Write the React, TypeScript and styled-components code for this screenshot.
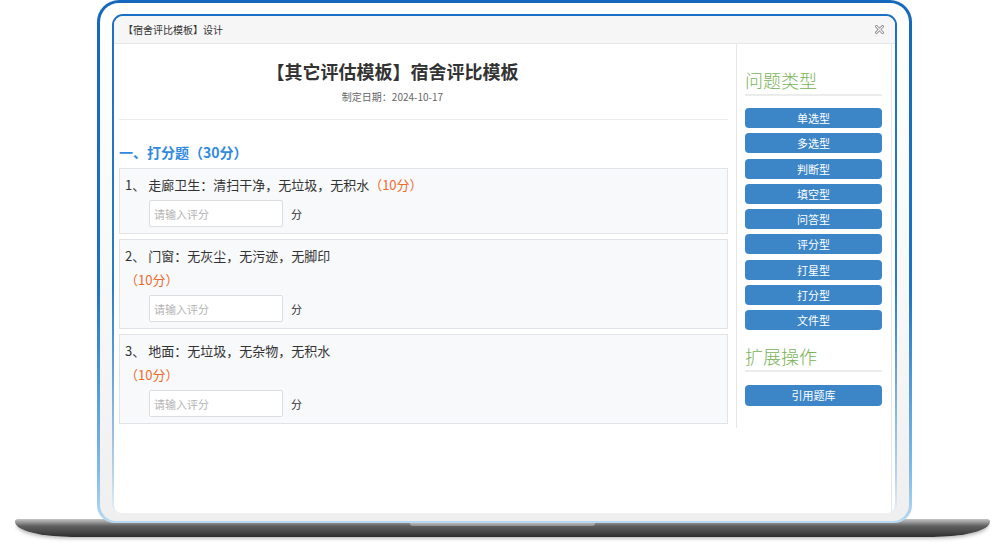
import React from "react";
import styled, { createGlobalStyle } from "styled-components";

const GlobalStyle = createGlobalStyle`
  html, body {
    margin: 0;
    padding: 0;
    background: #ffffff;
  }
  body {
    font-family: "Noto Sans CJK SC", "Liberation Sans", sans-serif;
    color: #333;
  }
`;

const Page = styled.div`
  width: 1000px;
  height: 546px;
  overflow: hidden;
  display: flex;
  flex-direction: column;
`;

const Lid = styled.div`
  position: relative;
  z-index: 2;
  margin-left: 97px;
  width: 815px;
  height: 523px;
  box-sizing: border-box;
  padding: 3px 3px 2px;
  border-radius: 22px 22px 18px 18px;
  background: linear-gradient(to bottom, #1568bb 0%, #1c74c6 55%, #7fbbe8 90%, #b9d9f1 100%);
`;

const Bezel = styled.div`
  height: 100%;
  box-sizing: border-box;
  padding: 11px 12px 8px;
  border-radius: 19px 19px 16px 16px;
  background: linear-gradient(to bottom, #ffffff 0%, #f7f7f7 60%, #efefef 100%);
`;

const ScreenFrame = styled.div`
  height: 100%;
  box-sizing: border-box;
  padding: 2px 2px 0;
  border-radius: 11px 11px 9px 9px;
  background: linear-gradient(to bottom, #1a70c2 0%, #2a7cc8 55%, #b7d3ea 92%, #e6eef5 100%);
`;

const Screen = styled.div`
  height: 100%;
  display: flex;
  flex-direction: column;
  border-radius: 9px 9px 8px 8px;
  background: #ffffff;
  overflow: hidden;
`;

const TitleBar = styled.div`
  flex: 0 0 28px;
  box-sizing: border-box;
  display: flex;
  align-items: center;
  justify-content: space-between;
  padding: 0 11px 0 9px;
  background: #f6f6f6;
  border-bottom: 1px solid #e8e8e8;
  font-size: 10px;
  color: #333;
`;

const CloseIcon = () => (
  <svg width="9" height="9" viewBox="0 0 9 9">
    <path d="M1.5 1.5 L7.5 7.5 M7.5 1.5 L1.5 7.5" stroke="#8a8a8a" strokeWidth="2.8" strokeLinecap="square" />
    <path d="M1.5 1.5 L7.5 7.5 M7.5 1.5 L1.5 7.5" stroke="#f6f6f6" strokeWidth="1.1" strokeLinecap="square" />
  </svg>
);

const Body = styled.div`
  flex: 1;
  display: flex;
  align-items: stretch;
`;

const Main = styled.div`
  width: 622px;
  box-sizing: border-box;
  padding: 0 8px 4px 5px;
`;

const Header = styled.div`
  padding: 15px 62px 15px 0;
  text-align: center;
  border-bottom: 1px solid #ececec;
`;

const DocTitle = styled.div`
  font-size: 18px;
  line-height: 24px;
  font-weight: 700;
  color: #333;
`;

const DocDate = styled.div`
  margin-top: 7px;
  font-size: 10px;
  line-height: 14px;
  color: #666;
`;

const SectionTitle = styled.div`
  margin: 22px 0 6px;
  font-size: 14px;
  line-height: 20px;
  font-weight: 700;
  color: #2f8ae0;
`;

const CardList = styled.div`
  display: flex;
  flex-direction: column;
  gap: 5px;
`;

const Card = styled.div`
  padding: 6px 5px;
  background: #f8f9fb;
  border: 1px solid #e1e3e7;
`;

const QText = styled.div`
  font-size: 13px;
  line-height: 20px;
  color: #333;
  white-space: pre;
`;

const Score = styled.span<{ $block?: boolean }>`
  color: #ef6a2c;
  font-size: 13px;
  line-height: 20px;
  display: ${(p) => (p.$block ? "block" : "inline")};
  margin-top: ${(p) => (p.$block ? "4px" : "0")};
`;

const InputRow = styled.div`
  margin: 5px 0 0 24px;
  display: flex;
  align-items: center;
  gap: 8px;
  font-size: 11px;
  color: #333;
`;

const ScoreInput = styled.input`
  width: 134px;
  height: 27px;
  box-sizing: border-box;
  padding: 0 4px;
  border: 1px solid #dcdde0;
  border-radius: 2px;
  background: #fff;
  font-family: inherit;
  font-size: 11px;
  outline: none;
  &::placeholder {
    color: #b4b4b4;
  }
`;

const SideColumn = styled.div`
  width: 156px;
  box-sizing: border-box;
  border-right: 1px solid #e6e6e6;
`;

const SidePanel = styled.div`
  border-left: 1px solid #e6e6e6;
  padding: 24px 9px 22px 8px;
`;

const SideHeading = styled.div<{ $gap?: number; $after?: number }>`
  margin-top: ${(p) => p.$gap ?? 0}px;
  padding-bottom: 2px;
  border-bottom: 2px solid #ececec;
  margin-bottom: ${(p) => p.$after ?? 12}px;
  font-size: 18px;
  line-height: 24px;
  font-weight: 300;
  color: #78b356;
`;

const ButtonStack = styled.div`
  display: flex;
  flex-direction: column;
  gap: 5.25px;
`;

const TypeButton = styled.button<{ $tall?: boolean }>`
  height: ${(p) => (p.$tall ? 21 : 20)}px;
  width: 100%;
  border: none;
  border-radius: 4px;
  background: #3c86c7;
  color: #fff;
  font-family: inherit;
  font-size: 11px;
  line-height: 20px;
  padding: 0;
`;

const Base = styled.div`
  position: relative;
  z-index: 1;
  margin: -4px 0 0 15px;
  width: 975px;
  height: 18px;
  border-radius: 3px 3px 60px 60px / 3px 3px 16px 16px;
  background: linear-gradient(
    to bottom,
    #c4c4c4 0%,
    #8d8d8d 22%,
    #5e5e5e 40%,
    #4a4a4a 70%,
    #2d2d2d 100%
  );
  box-shadow: 0 3px 4px -2px rgba(0, 0, 0, 0.35);
  display: flex;
  justify-content: center;
`;

const Notch = styled.div`
  margin-top: 4px;
  width: 185px;
  height: 3px;
  border-radius: 0 0 6px 6px;
  background: linear-gradient(to bottom, #b9b9b9, #8e8e8e);
`;

const types = ["单选型", "多选型", "判断型", "填空型", "问答型", "评分型", "打星型", "打分型", "文件型"];

const questions = [
  { no: "1、", text: "走廊卫生：清扫干净，无垃圾，无积水", inline: true },
  { no: "2、", text: "门窗：无灰尘，无污迹，无脚印", inline: false },
  { no: "3、", text: "地面：无垃圾，无杂物，无积水", inline: false },
];

export default function App() {
  return (
    <Page>
      <GlobalStyle />
      <Lid>
        <Bezel>
          <ScreenFrame>
            <Screen>
              <TitleBar>
                <span>【宿舍评比模板】设计</span>
                <CloseIcon />
              </TitleBar>
              <Body>
                <Main>
                  <Header>
                    <DocTitle>【其它评估模板】宿舍评比模板</DocTitle>
                    <DocDate>制定日期：2024-10-17</DocDate>
                  </Header>
                  <SectionTitle>一、打分题（30分）</SectionTitle>
                  <CardList>
                    {questions.map((q) => (
                      <Card key={q.no}>
                        <QText>
                          {q.no} {q.text}
                          {q.inline && <Score>（10分）</Score>}
                        </QText>
                        {!q.inline && <Score $block>（10分）</Score>}
                        <InputRow>
                          <ScoreInput placeholder="请输入评分" />
                          <span>分</span>
                        </InputRow>
                      </Card>
                    ))}
                  </CardList>
                </Main>
                <SideColumn>
                  <SidePanel>
                    <SideHeading>问题类型</SideHeading>
                    <ButtonStack>
                      {types.map((t) => (
                        <TypeButton key={t}>{t}</TypeButton>
                      ))}
                    </ButtonStack>
                    <SideHeading $gap={14} $after={9}>扩展操作</SideHeading>
                    <TypeButton $tall>引用题库</TypeButton>
                  </SidePanel>
                </SideColumn>
              </Body>
            </Screen>
          </ScreenFrame>
        </Bezel>
      </Lid>
      <Base>
        <Notch />
      </Base>
    </Page>
  );
}
